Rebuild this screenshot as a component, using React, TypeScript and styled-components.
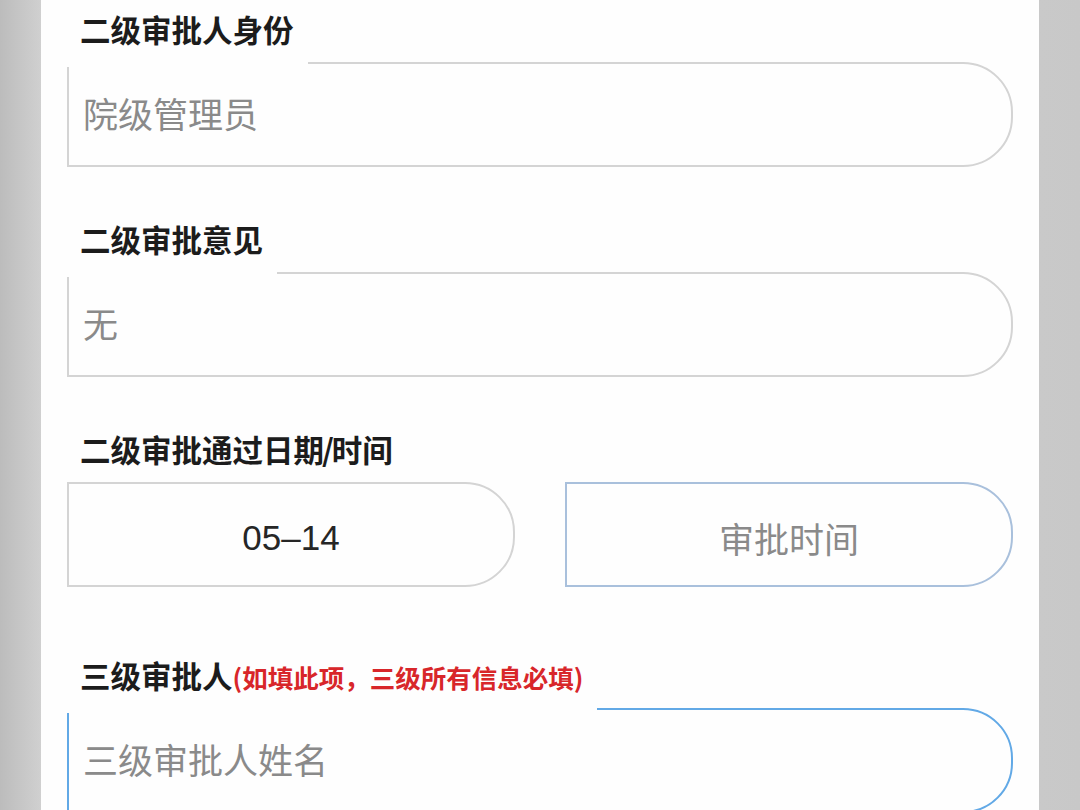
import React from 'react'
import styled, { createGlobalStyle } from 'styled-components'

const GlobalStyle = createGlobalStyle`
  html, body {
    margin: 0;
    padding: 0;
    height: 100%;
    overflow: hidden;
  }
  body {
    font-family: "Noto Sans CJK SC", "Noto Sans", sans-serif;
  }
`

const Page = styled.div`
  display: flex;
  justify-content: center;
  height: 810px;
  background: linear-gradient(90deg, #bcbcbc 0%, #d0d0d0 3.8%, #c9c9c9 96.2%, #c8c8c8 100%);
`

const Panel = styled.div`
  width: 998px;
  background: #fefefe;
  box-sizing: border-box;
  padding: 9px 26px 0;
`

const Field = styled.div<{ gap?: number }>`
  display: flex;
  flex-direction: column;
  align-items: flex-start;
  margin-bottom: ${({ gap }) => gap ?? 52}px;
`

const Label = styled.label<{ masked?: boolean }>`
  position: relative;
  z-index: ${({ masked }) => (masked ? 1 : 0)};
  display: inline-block;
  height: 58px;
  box-sizing: border-box;
  padding: 0 14px 18px 13px;
  margin-bottom: -5px;
  background: ${({ masked }) => (masked ? '#fefefe' : 'transparent')};
  font-size: 30.5px;
  line-height: 40px;
  font-weight: 700;
  color: #1c1c1c;
  white-space: nowrap;
`

const Slash = styled.span`
  display: inline-block;
  margin: 0 -2px;
`

const Hint = styled.span`
  font-size: 25.5px;
  font-weight: 700;
  color: #d8262a;
`

const Row = styled.div`
  display: grid;
  grid-template-columns: 1fr 1fr;
  column-gap: 50px;
  width: 100%;
`

const Box = styled.div<{ tone?: 'gray' | 'pale' | 'blue'; center?: boolean; filled?: boolean }>`
  width: 100%;
  height: 105px;
  box-sizing: border-box;
  display: flex;
  align-items: center;
  justify-content: ${({ center }) => (center ? 'center' : 'flex-start')};
  padding: ${({ center }) => (center ? '6px 14px 0' : '0 14px 5px')};
  border: 2px solid
    ${({ tone }) => (tone === 'blue' ? '#62a9e6' : tone === 'pale' ? '#a9c0dc' : '#d4d4d4')};
  border-radius: 0 50px 50px 0;
  background: #fefefe;
  font-size: 35px;
  color: ${({ filled }) => (filled ? '#262626' : '#8a8a8a')};
  font-family: ${({ filled }) =>
    filled ? '"Liberation Sans", "Noto Sans CJK SC", sans-serif' : '"Noto Sans CJK SC", sans-serif'};
`

const App = () => {
  return (
    <>
      <GlobalStyle />
      <Page>
        <Panel>
          <Field>
            <Label masked>二级审批人身份</Label>
            <Box>院级管理员</Box>
          </Field>
          <Field>
            <Label masked>二级审批意见</Label>
            <Box>无</Box>
          </Field>
          <Field gap={68}>
            <Label>
              二级审批通过日期<Slash>/</Slash>时间
            </Label>
            <Row>
              <Box center filled>05–14</Box>
              <Box center tone="pale">审批时间</Box>
            </Row>
          </Field>
          <Field>
            <Label masked>
              三级审批人<Hint>(如填此项，三级所有信息必填)</Hint>
            </Label>
            <Box tone="blue">三级审批人姓名</Box>
          </Field>
        </Panel>
      </Page>
    </>
  )
}

export default App
